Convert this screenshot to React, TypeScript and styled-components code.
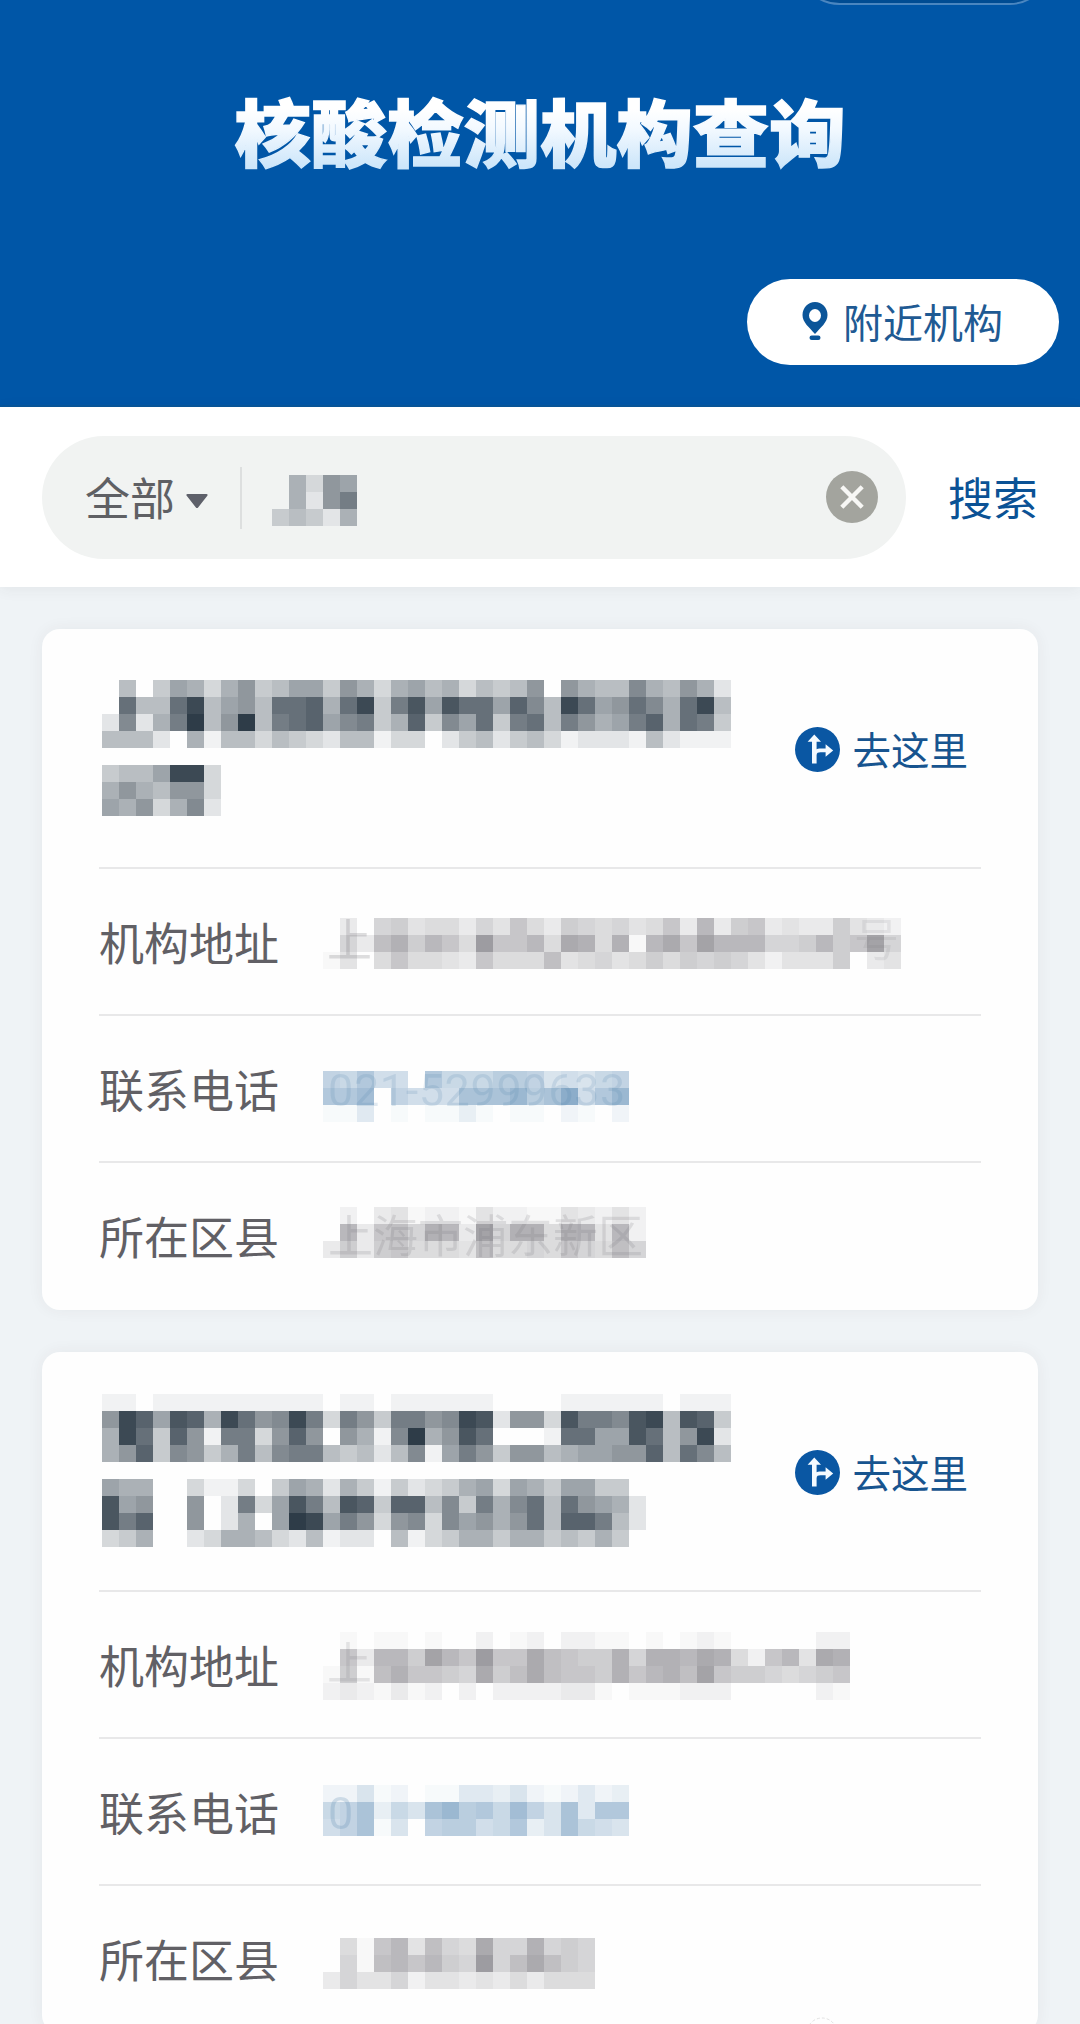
import React from 'react';
import styled, { createGlobalStyle, css } from 'styled-components';

const sans = `"Noto Sans CJK SC", "Noto Sans", sans-serif`;

const GlobalStyle = createGlobalStyle`
  * { box-sizing: border-box; }
  body { margin: 0; background: #eff3f6; font-family: ${sans}; }
`;

type Tone = 'ink' | 'gray' | 'blue';

interface GhostText {
  text: string;
  left: number;
  top: number;
  strength: number;
}

interface MosaicData {
  tone: Tone;
  offset: number;
  rows: string[];
  ghosts?: GhostText[];
}

interface Institution {
  id: number;
  name: MosaicData;
  fields: { label: string; value: MosaicData }[];
}

const darkest: Record<Tone, [number, number, number]> = {
  ink: [46, 60, 72],
  gray: [150, 149, 154],
  blue: [140, 173, 202],
};

const shade = (tone: Tone, level: number) => {
  if (level === 0) return 'transparent';
  const [r, g, b] = darkest[tone].map((c) => Math.round(255 - ((255 - c) * level) / 15));
  return `rgb(${r}, ${g}, ${b})`;
};

const Page = styled.main`
  position: relative;
  width: 1080px;
  height: 2024px;
  overflow: hidden;
  background: #eff3f6;
`;

const Banner = styled.header`
  position: relative;
  display: flex;
  flex-direction: column;
  align-items: center;
  height: 407px;
  padding-top: 76px;
  background: #0056a7;
  border-bottom: 2px solid #07559a;
`;

const Capsule = styled.div`
  position: absolute;
  top: -78px;
  left: 798px;
  width: 253px;
  height: 83px;
  border: 2px solid #4a86c0;
  border-radius: 42px;
  background: #004c93;
`;

const Title = styled.h1`
  margin: 0;
  font-size: 76.4px;
  line-height: 110px;
  font-weight: 900;
  white-space: nowrap;
  color: transparent;
  -webkit-text-stroke: 1.5px transparent;
  background: linear-gradient(#ffffff 30%, #f2f9ff 50%, #cde6fa 85%);
  background-clip: text;
  -webkit-background-clip: text;
  transform: scaleY(0.95);
  transform-origin: 50% 22%;
`;

const NearbyButton = styled.button`
  display: flex;
  align-items: center;
  align-self: flex-end;
  gap: 14px;
  width: 312px;
  height: 86px;
  margin: 93px 21px 0 0;
  padding: 0 0 2px 54px;
  border: 0;
  border-radius: 43px;
  background: #fff;
  color: #1f5a93;
  font: 400 40px/60px ${sans};
  white-space: nowrap;
`;

const SearchBar = styled.section`
  position: relative;
  display: flex;
  align-items: center;
  height: 180px;
  padding: 0 42px;
  background: #fff;
  box-shadow: 0 2px 14px rgba(60, 50, 50, 0.07);
`;

const SearchField = styled.div`
  display: flex;
  align-items: center;
  width: 864px;
  height: 123px;
  border-radius: 62px;
  background: #f1f3f2;
  margin-top: 1px;
`;

const Scope = styled.div`
  display: flex;
  align-items: center;
  gap: 11px;
  width: 200px;
  height: 62px;
  padding: 0 0 2px 43px;
  border-right: 2px solid #dddfdf;
  color: #5f6064;
  font-size: 45px;
  line-height: 60px;
  white-space: nowrap;
`;

const Query = styled.div`
  flex: 1;
  padding-left: 30px;
`;

const ClearButton = styled.button`
  display: flex;
  margin: 0 28px 2px 0;
  padding: 0;
  border: 0;
  background: none;
`;

const SearchButton = styled.button`
  margin: 0 0 1px 42px;
  padding: 0;
  border: 0;
  background: none;
  color: #0b5295;
  font: 400 45px/66px ${sans};
  white-space: nowrap;
`;

const List = styled.div`
  display: flex;
  flex-direction: column;
  gap: 42px;
  padding: 42px;
`;

const Card = styled.article`
  flex: none;
  height: 681px;
  padding: 0 57px;
  border-radius: 18px;
  background: #fefefe;
  box-shadow: 0 0 16px rgba(60, 50, 50, 0.06);
`;

const CardHead = styled.div`
  display: flex;
  justify-content: space-between;
  height: 238px;
  padding: 0 13px 0 3px;
`;

const GoButton = styled.button`
  display: flex;
  align-items: center;
  gap: 12px;
  margin: 0;
  padding: 2px 0 0;
  border: 0;
  background: none;
  color: #17548f;
  font: 400 38.5px/56px ${sans};
  white-space: nowrap;
`;

const GoText = styled.span`
  padding-bottom: 2px;
`;

const Field = styled.div`
  display: flex;
  height: 147px;
  border-top: 2px solid #e8e8e9;
`;

const FieldLabel = styled.span`
  width: 224px;
  padding-top: 40px;
  color: #616065;
  font-size: 45px;
  line-height: 66px;
  white-space: nowrap;
`;

const MosaicBox = styled.div<{ $offset: number }>`
  position: relative;
  align-self: flex-start;
  margin-top: ${(p) => p.$offset}px;
`;

const MosaicRow = styled.div`
  display: flex;
  height: 17px;
`;

const Tile = styled.i<{ $color: string }>`
  width: 17px;
  height: 17px;
  background: ${(p) => p.$color};
`;

const Ghost = styled.span<{ $left: number; $top: number; $strength: number; $tone: Tone }>`
  position: absolute;
  left: ${(p) => p.$left}px;
  top: ${(p) => p.$top}px;
  opacity: ${(p) => p.$strength};
  font-size: 45px;
  line-height: 60px;
  white-space: nowrap;
  color: #77767c;
  ${(p) =>
    p.$tone === 'blue' &&
    css`
      color: #4f82ab;
      font-family: Roboto, ${sans};
      letter-spacing: 0.6px;
    `}
`;

const BottomRing = styled.svg`
  position: absolute;
  left: 806px;
  top: 2016px;
`;

const Caret = styled.svg`
  margin-top: 10px;
`;

const Mosaic = ({ data }: { data: MosaicData }) => (
  <MosaicBox $offset={data.offset}>
    {data.rows.map((row, y) => (
      <MosaicRow key={y}>
        {row.split('').map((c, x) => (
          <Tile key={x} $color={shade(data.tone, parseInt(c, 16))} />
        ))}
      </MosaicRow>
    ))}
    {data.ghosts?.map((g) => (
      <Ghost key={g.text} $left={g.left} $top={g.top} $strength={g.strength} $tone={data.tone}>
        {g.text}
      </Ghost>
    ))}
  </MosaicBox>
);

const PinIcon = () => (
  <svg width="28" height="40" viewBox="0 0 28 40">
    <path
      fillRule="evenodd"
      fill="#0b5599"
      d="M14 1C7 1 1.500 6.700 1.500 14c0 7.500 7 12.500 12.500 19 5.500-6.500 12.500-11.500 12.500-19C26.500 6.700 21 1 14 1Zm0 7a6 6.500 0 1 1 0 13 6 6.500 0 0 1 0-13Z"
    />
    <rect x="8.500" y="34.500" width="11" height="4.500" rx="2.200" fill="#0b5599" />
  </svg>
);

const CaretIcon = () => (
  <Caret width="22" height="15" viewBox="0 0 22 15">
    <path d="M1.500 0h19c1 0 1.500 1 .8 1.800l-9.200 11.600c-.6.8-1.600.8-2.200 0L.7 1.800C0 1 .5 0 1.500 0Z" fill="#5e606a" />
  </Caret>
);

const ClearIcon = () => (
  <svg width="52" height="52" viewBox="0 0 52 52">
    <circle cx="26" cy="26" r="26" fill="#a3a49e" />
    <path d="M15.800 15.800l20.400 20.400M36.200 15.800L15.800 36.200" stroke="#f7f7f5" strokeWidth="4.400" />
  </svg>
);

const RouteIcon = () => (
  <svg width="45" height="45" viewBox="0 0 45 45">
    <circle cx="22.500" cy="22.500" r="22.500" fill="#0a57a3" />
    <path
      fill="#f4faff"
      d="M19.300 7.500l6.700 7.300h-4.400v7.400c.8-.5 1.800-.7 3-.7h6v-4.300l7.600 6.300-7.600 6.300v-4.500h-5c-2.500 0-4 .6-4 3v8.200h-4.600V14.800h-4.400Z"
    />
  </svg>
);

const query: MosaicData = {
  tone: 'ink',
  offset: 6,
  rows: ['06387', '0628a', '45426'],
};

const institutions: Institution[] = [
  {
    id: 1,
    name: {
      tone: 'ink',
      offset: 51,
      rows: [
        '0504763684577486367563545808655965862',
        '0b55be5785bbc6be4ad7dbb7c95eb78b96be5',
        '2926af58f5abc79a46c497b4ab5a867ac6ba4',
        '5552061553543255133024524531222152111',
        '0',
        '4557ee3',
        '6865883',
        '7683692',
      ],
    },
    fields: [
      {
        label: '机构地址',
        value: {
          tone: 'gray',
          offset: 49,
          rows: [
            '0306745536485376564583a37834337432',
            '0639b7a85e88a5cb5b1ac8daaa667a78d6',
            '1405855438555945645757676424447034',
          ],
          ghosts: [
            { text: '上', left: 4, top: -10, strength: 0.24 },
            { text: '号', left: 531, top: -10, strength: 0.12 },
          ],
        },
      },
      {
        label: '联系电话',
        value: {
          tone: 'blue',
          offset: 55,
          rows: ['87a660a77799856578', 'aac08666bbbd9bf6ad', '114010113101102102'],
          ghosts: [{ text: '021-52999633', left: 5, top: -10, strength: 0.16 }],
        },
      },
      {
        label: '所在区县',
        value: {
          tone: 'gray',
          offset: 44,
          rows: ['0203412214221143242', '0a3896ba3d6bb5ba4a2', '3737855549556586596'],
          ghosts: [{ text: '上海市浦东新区', left: 5, top: -3, strength: 0.18 }],
        },
      },
    ],
  },
  {
    id: 2,
    name: {
      tone: 'ink',
      offset: 42,
      rows: [
        '1101111111111011011111100001111110111',
        '8ec7dc6eb89ea3a84aa89ed2883daa9de5dc4',
        '6eb4c81aa38c808619f68db0001bb77db58e2',
        '68c49846a59aa54525917a8488567788c5b95',
        '0',
        '7660031130476264142346737647744',
        'd7800802a37da5dc4cc594a69b5b8762',
        'dac00802607fe7a8389397868b5cca52',
        '3460023665325122051346646645464',
      ],
    },
    fields: [
      {
        label: '机构地址',
        value: {
          tone: 'gray',
          offset: 40,
          rows: [
            '0101101002012022110101210000022',
            '083aa7da8e88c9877b6bbacb528a4cb',
            '1719b8876c79c9887b8ab9d87765678',
            '2321312020222233101112220000021',
          ],
          ghosts: [{ text: '上', left: 4, top: -1, strength: 0.16 }],
        },
      },
      {
        label: '联系电话',
        value: {
          tone: 'blue',
          offset: 46,
          rows: ['225120114435212423', '78b375bd9a7c85b4aa', '68b15089967a35b765'],
          ghosts: [{ text: '0', left: 5, top: -1, strength: 0.22 }],
        },
      },
      {
        label: '所在区县',
        value: {
          tone: 'gray',
          offset: 52,
          rows: ['0518a4965c66b676', '0619a8a76e69c976', '3644624434353555'],
        },
      },
    ],
  },
];

export default function App() {
  return (
    <Page>
      <GlobalStyle />
      <Banner>
        <Capsule />
        <Title>核酸检测机构查询</Title>
        <NearbyButton>
          <PinIcon />
          附近机构
        </NearbyButton>
      </Banner>
      <SearchBar>
        <SearchField>
          <Scope>
            全部
            <CaretIcon />
          </Scope>
          <Query>
            <Mosaic data={query} />
          </Query>
          <ClearButton aria-label="清除">
            <ClearIcon />
          </ClearButton>
        </SearchField>
        <SearchButton>搜索</SearchButton>
      </SearchBar>
      <List>
        {institutions.map((item) => (
          <Card key={item.id}>
            <CardHead>
              <Mosaic data={item.name} />
              <GoButton>
                <RouteIcon />
                <GoText>去这里</GoText>
              </GoButton>
            </CardHead>
            {item.fields.map((f) => (
              <Field key={f.label}>
                <FieldLabel>{f.label}</FieldLabel>
                <Mosaic data={f.value} />
              </Field>
            ))}
          </Card>
        ))}
      </List>
      <BottomRing width="32" height="8" viewBox="0 0 32 8">
        <circle cx="16" cy="17" r="15" fill="none" stroke="#e2e2e2" strokeDasharray="3 2" />
      </BottomRing>
    </Page>
  );
}
